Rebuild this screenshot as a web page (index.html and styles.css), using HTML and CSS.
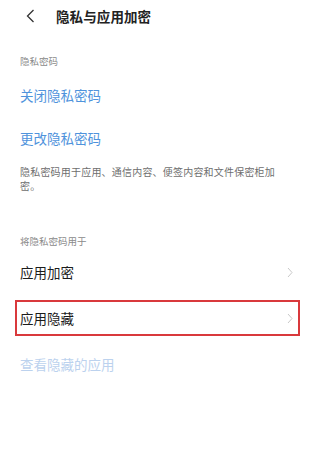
FILE: index.html
```html
<!DOCTYPE html>
<html lang="zh-CN">
<head>
    <meta charset="UTF-8">
    <meta name="viewport" content="width=device-width, initial-scale=1.0">
    <title>隐私与应用加密</title>
    <link rel="stylesheet" href="styles.css">
</head>
<body>

<div class="header">
    <svg class="back" width="9" height="14" viewBox="0 0 9 14">
        <polyline points="7.5,1 1.5,7 7.5,13" fill="none" stroke="#333" stroke-width="1.3"/>
    </svg>
    <h1>隐私与应用加密</h1>
</div>

<div class="content">
    <p class="label">隐私密码</p>
    <a class="link link-first">关闭隐私密码</a>
    <a class="link link-second">更改隐私密码</a>
    <p class="desc">隐私密码用于应用、通信内容、便签内容和文件保密柜加密。</p>

    <p class="label label-use">将隐私密码用于</p>
    <div class="list">
        <div class="row">
            <span>应用加密</span>
            <svg class="chevron" width="6" height="11" viewBox="0 0 6 11">
                <polyline points="1,1 5,5.5 1,10" fill="none" stroke="#c9c9c9" stroke-width="1"/>
            </svg>
        </div>
        <div class="row highlight">
            <span>应用隐藏</span>
            <svg class="chevron" width="6" height="11" viewBox="0 0 6 11">
                <polyline points="1,1 5,5.5 1,10" fill="none" stroke="#c9c9c9" stroke-width="1"/>
            </svg>
        </div>
        <div class="row row-muted">
            <span>查看隐藏的应用</span>
        </div>
    </div>
</div>

</body>
</html>
```

FILE: styles.css
```css
body { margin: 0; background-color: #ffffff; font-family: "Noto Sans CJK SC", "Noto Sans", sans-serif; color: #1c1c1c; width: 323px; height: 466px; overflow: hidden; }
p { margin: 0; }

.header { display: flex; align-items: center; height: 32px; padding-left: 26px; }
.back { display: block; }
.header h1 { margin: 0 0 0 21px; font-size: 13.5px; font-weight: 600; color: #222; letter-spacing: 0.1px; }

.content { padding: 0 20px; }
.label { font-size: 9.5px; line-height: 14px; color: #8a8a8a; margin-top: 22px; }
.label-use { margin-top: 41px; }
.link { display: block; font-size: 13.5px; line-height: 20px; color: #4f93dc; }
.link-first { margin-top: 17px; }
.link-second { margin-top: 23px; }
.desc { font-size: 10px; line-height: 14px; color: #6e6e6e; letter-spacing: 0.2px; margin-top: 17px; max-width: 262px; }

.list { margin-top: 1px; }
.row { position: relative; display: flex; align-items: center; justify-content: space-between; height: 46px; padding-right: 2px; margin-right: 8px; font-size: 13.5px; }
.chevron { display: block; }
.row-muted { color: #bcd2ee; }
.highlight::after { content: ""; position: absolute; top: 5px; bottom: 5px; left: -5px; right: -5px; border: 2px solid #d9393c; }
```
